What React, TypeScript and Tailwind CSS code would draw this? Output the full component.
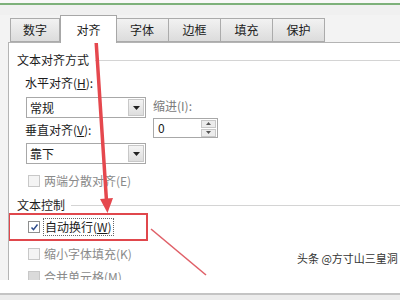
import React from 'react';

const tabs = ['数字', '对齐', '字体', '边框', '填充', '保护'];

function Select({ value, top }: { value: string; top: string }) {
    return (
        <div className={`ml-[17px] ${top} flex h-[21px] w-[120px] items-center border border-[#a8a8a8] bg-white`}>
            <span className="flex-1 pl-[3px] text-[12px] leading-[14px]">{value}</span>
            <span className="mr-[1px] flex h-[17px] w-[16px] items-center justify-center border border-[#c8c8c8] bg-gradient-to-b from-[#f4f4f4] to-[#dedede]">
                <svg width="7" height="4" viewBox="0 0 7 4"><path d="M0 0h7L3.5 4z" fill="#222" /></svg>
            </span>
        </div>
    );
}

function Checkbox({ checked, disabled }: { checked?: boolean; disabled?: boolean }) {
    return (
        <span className={`flex h-[12px] w-[12px] shrink-0 items-center justify-center border ${disabled ? 'border-[#c8c8c8] bg-[#f4f4f4]' : 'border-[#8e8f8f] bg-white'}`}>
            {checked && (
                <svg width="9" height="9" viewBox="0 0 9 9"><path d="M1.5 4.5l2 2.2L7.5 1.5" fill="none" stroke="#2b4a8a" strokeWidth="1.5" /></svg>
            )}
        </span>
    );
}

export default function App() {
    return (
        <div className="relative h-[300px] w-[400px] overflow-hidden bg-[#f3f3f3] text-[#1c1c1c]" style={{ fontFamily: '"Noto Sans CJK SC", "Noto Sans", sans-serif' }}>
            {/* window top edge */}
            <div className="h-[3px] bg-[#f8f8f8]" />
            <div className="h-[2px] bg-[#7db17a]" />
            <div className="h-[10px] bg-[#f0f0f0]" />

            {/* tab strip */}
            <div className="flex h-[27px] items-end pl-[10px]">
                {tabs.map((t, i) =>
                    i === 1 ? (
                        <div key={t} className="relative z-10 -mb-px flex h-[28px] w-[57px] items-center justify-center border border-b-0 border-[#a7a7a7] bg-white pt-[1px] text-[12px]">
                            {t}
                        </div>
                    ) : (
                        <div key={t} className={`flex h-[24px] items-center justify-center border border-[#ababab] bg-gradient-to-b from-[#f2f2f2] to-[#dcdcdc] text-[12px] ${i === 0 ? 'w-[50px]' : 'w-[53px] -ml-px'} ${i === 2 ? 'border-l-0' : ''}`}>
                            {t}
                        </div>
                    )
                )}
            </div>

            {/* panel */}
            <div className="ml-[8px] h-[238px] overflow-hidden border-l border-t border-[#b4b4b4] bg-white text-[12px] leading-[14px]">
                <div className="mt-[10px] flex items-center pl-[8px]">
                    <span>文本对齐方式</span>
                    <span className="ml-[6px] h-px flex-1 bg-[#d4d4d4]" />
                </div>
                <div className="flex">
                    <div>
                        <div className="mt-[9px] pl-[16px]">水平对齐(<span className="underline">H</span>):</div>
                        <Select value="常规" top="mt-[7px]" />
                        <div className="mt-[5px] pl-[16px]">垂直对齐(<span className="underline">V</span>):</div>
                        <Select value="靠下" top="mt-[6px]" />
                    </div>
                    <div className="ml-[7px] pt-[32px]">
                        <div className="text-[#7a7a7a]">缩进(I):</div>
                        <div className="mt-[5px] flex h-[20px] w-[65px] items-center border border-[#a8a8a8] bg-white">
                            <span className="flex-1 pl-[4px]">0</span>
                            <span className="mr-[1px] flex h-[17px] w-[15px] flex-col gap-px">
                                <span className="flex flex-1 items-center justify-center border border-[#c8c8c8] bg-[#ececec]">
                                    <svg width="5" height="3" viewBox="0 0 5 3"><path d="M0 3h5L2.5 0z" fill="#555" /></svg>
                                </span>
                                <span className="flex flex-1 items-center justify-center border border-[#c8c8c8] bg-[#ececec]">
                                    <svg width="5" height="3" viewBox="0 0 5 3"><path d="M0 0h5L2.5 3z" fill="#555" /></svg>
                                </span>
                            </span>
                        </div>
                    </div>
                </div>
                <div className="mt-[10px] flex items-center gap-[4px] pl-[19px] text-[#8a8a8a]">
                    <Checkbox disabled />
                    <span>两端分散对齐(E)</span>
                </div>
                <div className="mt-[10px] flex items-center pl-[8px]">
                    <span>文本控制</span>
                    <span className="ml-[6px] h-px flex-1 bg-[#d4d4d4]" />
                </div>
                {/* highlighted row */}
                <div className="mt-[1px] -ml-px flex h-[28px] w-[140px] items-center border-2 border-[#e0474c] pl-[18px]">
                    <Checkbox checked />
                    <span className="ml-[3px] border border-dotted border-[#666] px-[1px] leading-[16px]">
                        自动换行(<span className="underline">W</span>)
                    </span>
                </div>
                <div className="mt-[6px] flex items-center gap-[4px] pl-[19px] text-[#8a8a8a]">
                    <Checkbox disabled />
                    <span>缩小字体填充(K)</span>
                </div>
                <div className="mt-[9px] flex items-center gap-[4px] pl-[19px] text-[#8a8a8a]">
                    <span className="h-[12px] w-[12px] border border-[#c8c8c8] bg-[#dadada]" />
                    <span>合并单元格(M)</span>
                </div>
            </div>
            <div className="h-[13px] bg-white" />
            <div className="h-[2px] bg-[#c4c4c4]" />
            <div className="h-[5px] bg-[#ececec]" />

            {/* watermark */}
            <div className="absolute left-[297px] top-[251px] whitespace-nowrap text-[11px] leading-[14px] text-[#333]">头条 @方寸山三皇洞</div>

            {/* annotation arrows */}
            <svg className="pointer-events-none absolute left-0 top-0" width="400" height="300" viewBox="0 0 400 300">
                <path d="M95.5 32 L106.5 201" stroke="#e5484e" strokeWidth="3.5" strokeLinecap="round" />
                <path d="M100 199 L113 198 L107.5 213 Z" fill="#e5484e" />
                <path d="M151 229 L206 275" stroke="#e06068" strokeWidth="1.6" />
            </svg>
        </div>
    );
}
